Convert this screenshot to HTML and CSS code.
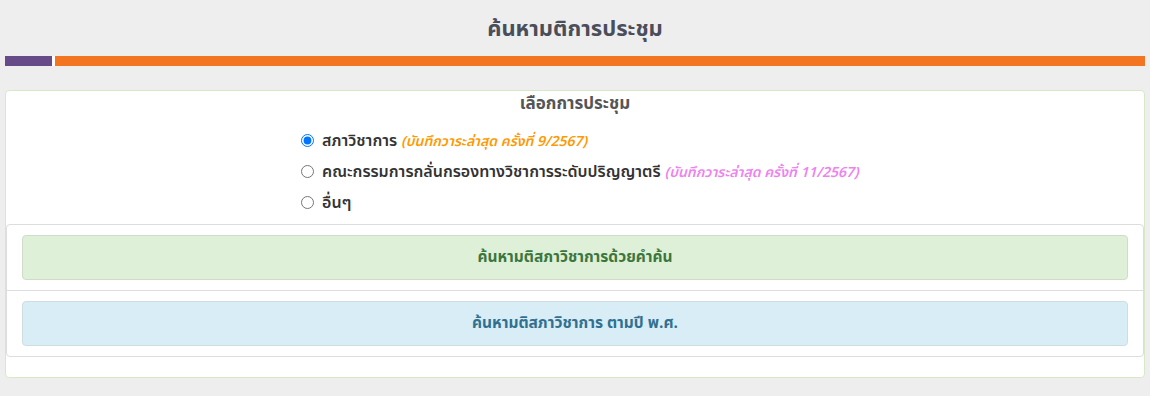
FILE: index.html
```html
<!DOCTYPE html>
<html lang="th">
<head>
  <meta charset="UTF-8">
  <meta name="viewport" content="width=device-width, initial-scale=1.0">
  <title>ค้นหามติการประชุม</title>
  <link rel="stylesheet" href="styles.css">
</head>
<body>
  <h1 class="page-title">ค้นหามติการประชุม</h1>
  <div class="title-bar">
    <span class="bar-purple"></span>
    <span class="bar-orange"></span>
  </div>

  <div class="panel">
    <h2 class="panel-heading">เลือกการประชุม</h2>
    <div class="meeting-list">
      <label class="meeting"><input type="radio" name="meeting" checked>สภาวิชาการ <em class="note-orange">(บันทึกวาระล่าสุด ครั้งที่ 9/2567)</em></label>
      <label class="meeting"><input type="radio" name="meeting">คณะกรรมการกลั่นกรองทางวิชาการระดับปริญญาตรี <em class="note-pink">(บันทึกวาระล่าสุด ครั้งที่ 11/2567)</em></label>
      <label class="meeting"><input type="radio" name="meeting">อื่นๆ</label>
    </div>

    <div class="search-box">
      <div class="search-row">
        <a class="search-btn btn-green" href="#">ค้นหามติสภาวิชาการด้วยคำค้น</a>
      </div>
      <div class="search-row">
        <a class="search-btn btn-blue" href="#">ค้นหามติสภาวิชาการ ตามปี พ.ศ.</a>
      </div>
    </div>
  </div>
</body>
</html>
```

FILE: styles.css
```css
body {
    margin: 0;
    background: #eeeeee;
    font-family: Tahoma, "Noto Sans Thai", "Noto Sans", sans-serif;
    color: #333;
}
.page-title {
    margin: 0;
    padding-top: 15px;
    height: 30px;
    line-height: 30px;
    font-size: 22px;
    font-weight: bold;
    text-align: center;
    color: #4a4e5a;
}
.title-bar {
    display: flex;
    height: 10px;
    margin: 11px 5px 0;
}
.bar-purple {
    width: 47px;
    background: #674a88;
}
.bar-orange {
    flex: 1;
    background: #f47521;
    border-left: 3px solid #fff; /* เส้นคั่นสีขาว */
}
.panel {
    margin: 24px 5px 0;
    padding-bottom: 20px;
    background: #fff;
    border: 1px solid #d6e9c6;
    border-radius: 4px;
}
.panel-heading {
    margin: 0;
    padding-top: 1px;
    line-height: 24px;
    font-size: 17px;
    font-weight: bold;
    color: #555;
    text-align: center;
}
.meeting-list {
    padding: 10px 0 5px 295px;
}
.meeting {
    display: block;
    height: 31px;
    line-height: 31px;
    font-size: 16px;
    font-weight: 600;
    color: #333;
}
.meeting input {
    width: 13px;
    height: 13px;
    margin: 0 8px 0 0;
    vertical-align: -1px;
}
.meeting em {
    font-size: 14px;
}
.note-orange {
    color: #ff9900;
}
.note-pink {
    color: #ee82ee;
}
.search-box {
    border: 1px solid #ddd;
    border-radius: 4px;
}
.search-row {
    padding: 10px 15px;
}
.search-row + .search-row {
    border-top: 1px solid #ddd;
}
.search-btn {
    display: block;
    height: 43px;
    line-height: 43px;
    border-radius: 4px;
    text-align: center;
    font-size: 15.5px;
    font-weight: bold;
    text-decoration: none;
}
.btn-green {
    background: #dff0d8;
    border: 1px solid #d0dccb;
    color: #3c763d;
}
.btn-blue {
    background: #d9edf7;
    border: 1px solid #cfdde3;
    color: #31708f;
}
```
